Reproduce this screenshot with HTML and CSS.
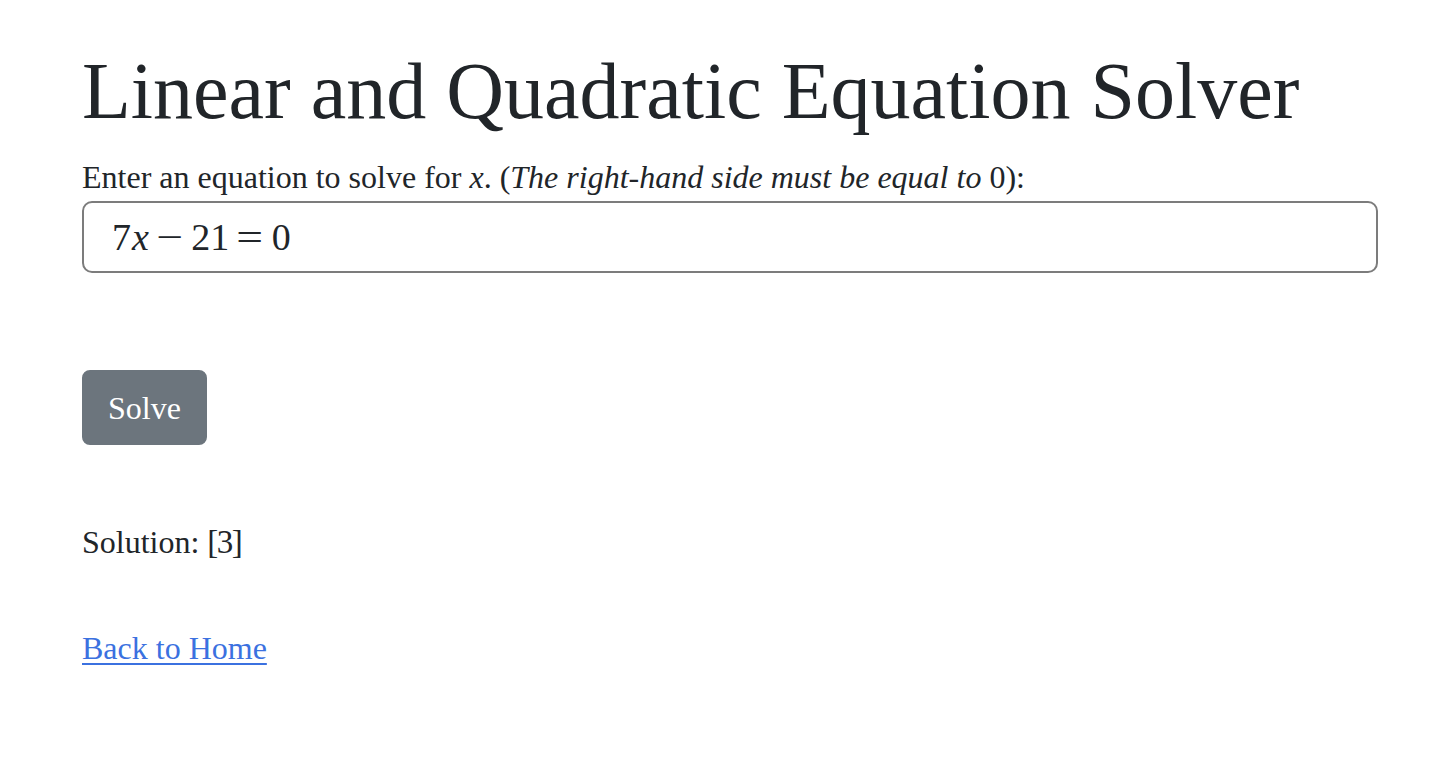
FILE: index.html
```html
<!DOCTYPE html>
<html lang="en">
<head>
<meta charset="utf-8">
<title>Linear and Quadratic Equation Solver</title>
<link rel="stylesheet" href="styles.css">
</head>
<body>
<main class="container">
  <h1 class="title">Linear and Quadratic Equation Solver</h1>
  <form class="solver">
    <label class="label" for="eq">Enter an equation to solve for <i>x</i>. (<i>The right-hand side must be equal to </i>0):</label>
    <div class="field" id="eq"><span class="math"><span class="num">7</span><span class="var">x</span><span class="op">−</span><span class="num">21</span><span class="op">=</span><span class="num">0</span></span></div>
    <button type="button" class="btn">Solve</button>
  </form>
  <p class="solution">Solution: <span class="math small"><span class="br">[</span><span class="num">3</span><span class="br">]</span></span></p>
  <p class="home"><a href="#" class="link">Back to Home</a></p>
</main>
</body>
</html>
```
FILE: styles.css
```css
* { box-sizing: border-box; }
html, body { margin: 0; background: #fff; }
body {
  font-family: "Liberation Serif", "Times New Roman", serif;
  font-size: 32px;
  line-height: 1.5;
  color: #212529;
}
.container { padding: 43px 76px 0 82px; }
.title {
  font-size: 80px;
  font-weight: 400;
  line-height: 1.2;
  margin: 0 0 14px;
}
.solver { display: flex; flex-direction: column; align-items: flex-start; }
.label { display: block; }
.field {
  align-self: stretch;
  height: 72px;
  border: 2px solid #7c7c7c;
  border-radius: 10px;
  padding: 10px 24px 10px 28px;
  display: flex;
  align-items: center;
}
.math { font-family: "Liberation Serif", serif; font-size: 38px; line-height: 1; }
.math .var { font-style: italic; margin-left: 1px; }
.math .op { margin: 0 11px 0 10px; transform: scaleX(1.25); display: inline-block; }
.btn {
  margin-top: 97px;
  font: inherit;
  color: #fff;
  background: #6c757d;
  border: 2px solid #6c757d;
  border-radius: 8px;
  padding: 12px 24px 11px;
  line-height: 1.5;
}
.solution { margin: 73px 0 0; }
.math.small { font-size: 33px; letter-spacing: -1.5px; }
.br { font-weight: 300; }
.home { margin: 58px 0 0; }
.link { color: #3b71e0; text-decoration: underline; text-decoration-thickness: 2px; text-underline-offset: 4px; }
```
